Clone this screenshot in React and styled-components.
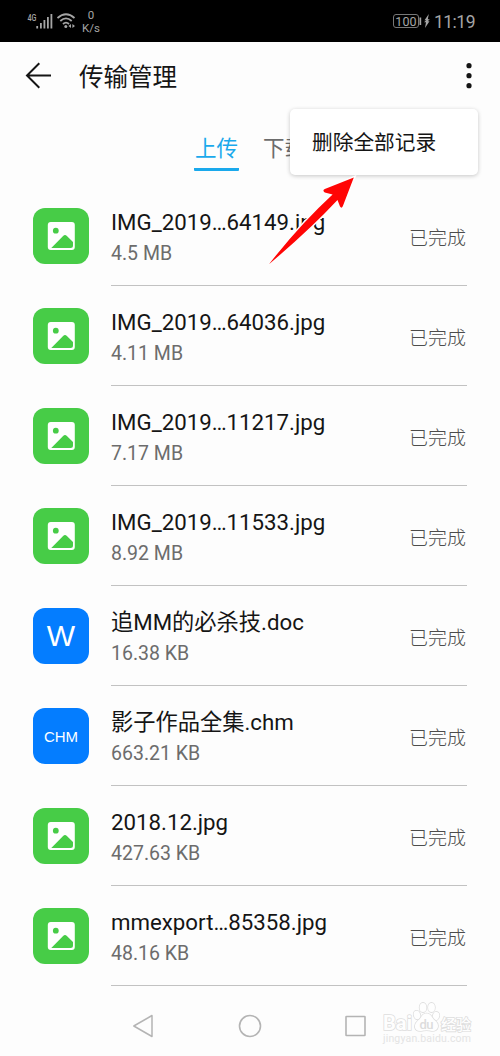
import React from 'react'
import styled, { createGlobalStyle } from 'styled-components'

const colors = {
  accent: '#1aa9ec',
  blue: '#047dff',
  green: '#47cc47',
  line: '#c2c2c2',
  nav: '#b4b4b4',
  status: '#a5a5a5',
  text: '#151515',
  textLight: '#6c6c6c',
}

const GlobalStyle = createGlobalStyle`
  * {
    box-sizing: border-box;
  }

  body {
    background: #fdfdfd;
    font-family: Roboto, 'Noto Sans CJK SC', sans-serif;
    margin: 0;
  }

  svg {
    display: block;
  }
`

const Screen = styled.div`
  color: ${colors.text};
  display: flex;
  flex-direction: column;
  height: 1056px;
  overflow: hidden;
  position: relative;
  width: 500px;
`

const StatusBar = styled.header`
  align-items: center;
  background: #000;
  color: ${colors.status};
  display: flex;
  flex: none;
  height: 42px;
  justify-content: space-between;
  padding: 0 25px 0 27px;
`

const StatusGroup = styled.div`
  align-items: center;
  display: flex;
`

const Speed = styled.div`
  font-size: 11.5px;
  line-height: 13px;
  margin: 1px 0 0 4px;
  text-align: center;
`

const Battery = styled.div`
  border: 1px solid #777;
  border-radius: 3px;
  font-size: 12.5px;
  height: 14px;
  line-height: 13px;
  text-align: center;
  width: 26px;
`

const Clock = styled.time`
  font-size: 17.5px;
  letter-spacing: -0.5px;
  line-height: 20px;
  margin: 1px 0 0 3px;
`

const Toolbar = styled.div`
  align-items: center;
  display: flex;
  flex: none;
  height: 67px;
  padding: 0 28px 0 25px;
`

const Title = styled.h1`
  flex: 1;
  font-size: 24.5px;
  font-weight: 400;
  line-height: 34px;
  margin: 4px 0 0 26px;
`

const Tabs = styled.nav`
  display: flex;
  flex: none;
  gap: 23px;
  height: 77px;
  padding: 22px 0 0 194px;
`

const Tab = styled.div`
  border-bottom: 3px solid ${({ $active }) => ($active ? colors.accent : 'transparent')};
  border-radius: 1px;
  color: ${({ $active }) => ($active ? colors.accent : colors.textLight)};
  font-size: 21.5px;
  height: 40px;
  line-height: 36px;
  text-align: center;
  width: 45px;
`

const Files = styled.ul`
  flex: none;
  list-style: none;
  margin: 0;
  padding: 0 33px;
`

const Row = styled.li`
  align-items: stretch;
  display: flex;
  gap: 22px;
  height: 100px;
`

const FileIcon = styled.div`
  align-items: center;
  background: ${({ $color }) => $color};
  border-radius: 12px;
  color: #fff;
  display: flex;
  flex: none;
  font-family: 'Liberation Sans', sans-serif;
  font-size: ${({ $size }) => $size || 16}px;
  height: 56px;
  justify-content: center;
  margin-top: 22px;
  width: 56px;
`

const FileBody = styled.div`
  align-items: center;
  border-bottom: 1px solid ${colors.line};
  display: flex;
  flex: 1;
  justify-content: space-between;
`

const FileName = styled.div`
  font-size: 22.25px;
  line-height: 32px;
  margin-top: 5px;
  white-space: nowrap;
`

const FileSize = styled.div`
  color: ${colors.textLight};
  font-size: 19.5px;
  line-height: 32px;
`

const FileState = styled.div`
  color: #4c4c4c;
  font-size: 19px;
  font-weight: 300;
  margin: 1px 1px 0 0;
`

const Menu = styled.div`
  background: #fff;
  border-radius: 5px;
  box-shadow: 0 1px 4px rgba(0, 0, 0, 0.22);
  font-size: 20.7px;
  height: 66px;
  left: 290px;
  line-height: 68px;
  padding-left: 22px;
  position: absolute;
  top: 109px;
  white-space: nowrap;
  width: 188px;
`

const Pointer = styled.svg`
  left: 266px;
  position: absolute;
  top: 174px;
`

const NavBar = styled.footer`
  align-items: center;
  display: flex;
  flex: 1;
  justify-content: space-between;
  padding: 10px 132px 0 131px;
`

const Watermark = styled.svg`
  left: 380px;
  paint-order: stroke;
  position: absolute;
  top: 998px;
`

const files = [
  { name: 'IMG_2019…64149.jpg', size: '4.5 MB' },
  { name: 'IMG_2019…64036.jpg', size: '4.11 MB' },
  { name: 'IMG_2019…11217.jpg', size: '7.17 MB' },
  { name: 'IMG_2019…11533.jpg', size: '8.92 MB' },
  { name: '追MM的必杀技.doc', size: '16.38 KB', label: 'W', labelSize: 30 },
  { name: '影子作品全集.chm', size: '663.21 KB', label: 'CHM', labelSize: 15 },
  { name: '2018.12.jpg', size: '427.63 KB' },
  { name: 'mmexport…85358.jpg', size: '48.16 KB' },
]

const SignalIcon = () => (
  <svg width="30" height="20" viewBox="0 0 30 20" fill={colors.status}>
    <text x="0.5" y="9.5" fontSize="8.5" fontWeight="500" textLength="9" lengthAdjust="spacingAndGlyphs">
      4G
    </text>
    <rect x="9.3" y="15" width="1.8" height="2.5" />
    <rect x="13" y="12" width="1.8" height="5.5" />
    <rect x="16.5" y="9" width="1.8" height="8.5" />
    <rect x="20" y="6" width="1.8" height="11.5" />
    <rect x="23.5" y="3" width="1.8" height="14.5" />
  </svg>
)

const WifiIcon = () => (
  <svg width="21" height="18" viewBox="0 0 21 18" fill="none" stroke={colors.status} strokeWidth="1.8">
    <path d="M0.5 6Q9 -1.5 17.5 6M3.3 9Q9 3.8 14.7 9M6 12Q9 9.2 12 12" />
    <circle cx="8.8" cy="14.5" r="1.5" fill={colors.status} stroke="none" />
    <path d="M11.4 14L14 12V16ZM18 14L15.4 12V16Z" fill={colors.status} stroke="none" />
  </svg>
)

const PictureIcon = () => (
  <svg width="28" height="28" viewBox="0 0 28 28">
    <rect x="0.8" y="0" width="27" height="28" rx="3" fill="#fff" />
    <circle cx="8.8" cy="8.7" r="2.9" fill={colors.green} />
    <path d="M4.3 26L16.1 14Q18 12 19.9 14L26 20V23.5Q26 26 23.5 26Z" fill={colors.green} />
  </svg>
)

const File = ({ name, size, label, labelSize }) => (
  <Row>
    <FileIcon $color={label ? colors.blue : colors.green} $size={labelSize}>
      {label || <PictureIcon />}
    </FileIcon>
    <FileBody>
      <div>
        <FileName>{name}</FileName>
        <FileSize>{size}</FileSize>
      </div>
      <FileState>已完成</FileState>
    </FileBody>
  </Row>
)

const App = () => (
  <>
    <GlobalStyle />
    <Screen>
      <StatusBar>
        <StatusGroup>
          <SignalIcon />
          <WifiIcon />
          <Speed>
            0<br />
            K/s
          </Speed>
        </StatusGroup>
        <StatusGroup>
          <Battery>100</Battery>
          <svg width="12" height="14" viewBox="0 0 12 14" fill={colors.status}>
            <path d="M0.5 3.5H2.2V11H0.5ZM9.8 0L5.5 6.2H7.3L5 8.2H7L6 14L10.5 7.3H8.7L10.8 5.2H8.8Z" />
          </svg>
          <Clock>11:19</Clock>
        </StatusGroup>
      </StatusBar>
      <Toolbar>
        <svg width="28" height="28" viewBox="0 0 28 28" fill="none" stroke={colors.text} strokeWidth="2">
          <path d="M26 13.5H2M14.3 1.3L2 13.5L14.3 25.7" />
        </svg>
        <Title>传输管理</Title>
        <svg width="6" height="26" viewBox="0 0 6 26" fill={colors.text}>
          <circle cx="3" cy="2.7" r="2.6" />
          <circle cx="3" cy="12.7" r="2.6" />
          <circle cx="3" cy="22.7" r="2.6" />
        </svg>
      </Toolbar>
      <Tabs>
        <Tab $active>上传</Tab>
        <Tab>下载</Tab>
      </Tabs>
      <Files>
        {files.map(file => (
          <File key={file.name} {...file} />
        ))}
      </Files>
      <NavBar>
        <svg width="24" height="24" viewBox="0 0 24 24" fill="none" stroke={colors.nav} strokeWidth="1.5">
          <path d="M21 1.5V22.5L2.8 12Z" strokeLinejoin="round" />
        </svg>
        <svg width="24" height="24" viewBox="0 0 24 24" fill="none" stroke={colors.nav} strokeWidth="1.6">
          <circle cx="12" cy="12" r="10.5" />
        </svg>
        <svg width="24" height="24" viewBox="0 0 24 24" fill="none" stroke={colors.nav} strokeWidth="1.6">
          <rect x="2" y="2.5" width="19" height="19" rx="0.5" />
        </svg>
      </NavBar>
      <Menu>删除全部记录</Menu>
      <Pointer width="94" height="94" viewBox="266 174 94 94">
        <path
          d="M353.8 177.6L342.8 206.3Q341.5 208.8 340 206.6L337.5 200Q309 230.5 269 264.2Q300 224.5 332.6 194.5L324.8 192.4Q322 190.5 324.8 189Z"
          fill="#ff0505"
          stroke="#fefefe"
          strokeWidth="3"
          paintOrder="stroke"
        />
      </Pointer>
      <Watermark width="100" height="50" viewBox="0 0 100 50" fill="#fefefe" stroke="#dedede" strokeWidth="1.6">
        <text x="3" y="31.5" fontSize="21" fontWeight="700" textLength="29" lengthAdjust="spacingAndGlyphs">
          Bai
        </text>
        <ellipse cx="37" cy="17" rx="3.2" ry="4.3" transform="rotate(-15 37 17)" />
        <ellipse cx="43" cy="9.5" rx="3.4" ry="4.6" />
        <ellipse cx="51.5" cy="9.5" rx="3.4" ry="4.6" />
        <ellipse cx="56" cy="18" rx="3.2" ry="4.2" transform="rotate(15 56 18)" />
        <path d="M46.5 15.5C51.5 15.5 51.5 20 55 22.5C60 26.5 58.5 33 52 33C48 32 45 32 41 33C34 33.5 33 27 38 22.5C42 20 41.5 15.5 46.5 15.5Z" />
        <text x="39.5" y="31" fontSize="13" fontWeight="500" textLength="14" fill="#dcdcdc" stroke="none">
          du
        </text>
        <text x="61" y="32" fontSize="15" fontWeight="500" textLength="30">
          经验
        </text>
        <text x="3" y="44" fontSize="10.5" textLength="88" fill="#e4e4e4" stroke="none">
          jingyan.baidu.com
        </text>
      </Watermark>
    </Screen>
  </>
)

export default App
